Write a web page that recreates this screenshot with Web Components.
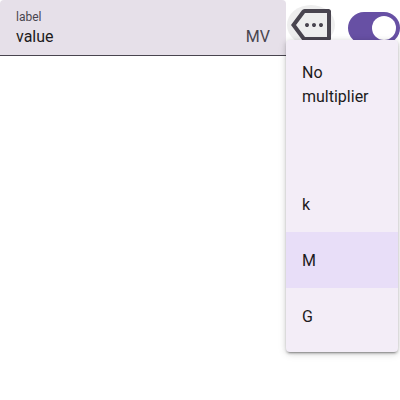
<!DOCTYPE html>
<html lang="en"><head><meta charset="utf-8"><title>Multiplier</title>
<style>
html,body{margin:0;height:100%;background:#fff;overflow:hidden}
body{font:16px/24px Roboto,sans-serif;color:#1d1b20}
</style></head><body>
<value-row></value-row>
<script>
const define=(name,html)=>customElements.define(name,class extends HTMLElement{
  constructor(){super();this.attachShadow({mode:'open'}).innerHTML=html;}
});
define('filled-field',`<style>
:host{display:flex;box-sizing:border-box;width:286px;height:56px;padding:9px 16px 6px;background:#e6e0e9;border-bottom:1px solid #49454f;border-radius:4px 4px 0 0;align-items:flex-end;justify-content:space-between}
.text{display:flex;flex-direction:column}
.label{font-size:12px;line-height:16px;color:#49454f}
.unit{color:#49454f}
</style><div class="text"><span class="label"><slot name="label"></slot></span><span class="value"><slot></slot></span></div><span class="unit"><slot name="unit"></slot></span>`);
define('more-button',`<style>
:host{display:flex;width:48px;height:40px;border-radius:50%;background:#eee;align-items:center;justify-content:center;color:#49454f}
svg{display:block;flex:none}
</style><svg width="48" height="48" viewBox="0 -960 960 960" fill="currentColor"><path d="M350-160q-16 0-30-8T296-192L80-480l216-288q10-16 24-24t30-8h480q21 0 35.500 14.500T880-750v540q0 21-14.500 35.500T830-160H350ZM180-480l180 240h440v-480H360L180-480Zm220 40q17 0 28.500-11.500T440-480q0-17-11.500-28.500T400-520q-17 0-28.500 11.500T360-480q0 17 11.500 28.500T400-440Zm140 0q17 0 28.500-11.500T580-480q0-17-11.500-28.500T540-520q-17 0-28.500 11.500T500-480q0 17 11.500 28.500T540-440Zm140 0q17 0 28.500-11.500T720-480q0-17-11.500-28.500T680-520q-17 0-28.500 11.500T640-480q0 17 11.500 28.500T680-440Z"/></svg>`);
define('toggle-switch',`<style>
:host{display:flex;box-sizing:border-box;width:52px;height:32px;border-radius:16px;background:#6750a4;padding:4px;justify-content:flex-end}
i{width:24px;height:24px;border-radius:50%;background:#fff}
</style><i></i>`);
define('menu-item',`<style>
:host{display:flex;box-sizing:border-box;height:56px;padding:2px 16px 0;align-items:center}
:host([tall]){height:88px;align-items:flex-start;padding-top:13px;margin-bottom:40px}
:host([selected]){background:#e8def8}
</style><slot></slot>`);
define('option-menu',`<style>
:host{display:block;box-sizing:border-box;width:112px;height:312px;padding:8px 0;background:#f3edf7;border-radius:4px;box-shadow:0 3px 1px -2px rgba(0,0,0,.2),0 2px 2px 0 rgba(0,0,0,.14),0 1px 5px 0 rgba(0,0,0,.12),0 2px 8px 0 rgba(0,0,0,.12);overflow:hidden}
</style><slot></slot>`);
define('value-row',`<style>
:host{display:flex;position:relative;height:56px;width:400px}
more-button{margin:5px 0 0 1px}
toggle-switch{margin:12px 0 0 13px}
option-menu{position:absolute;left:286px;top:40px}
</style>
<filled-field><span slot="label">label</span>value<span slot="unit">MV</span></filled-field>
<more-button></more-button><toggle-switch></toggle-switch>
<option-menu><menu-item tall>No<br>multiplier</menu-item><menu-item>k</menu-item><menu-item selected>M</menu-item><menu-item>G</menu-item></option-menu>`);
</script></body></html>
